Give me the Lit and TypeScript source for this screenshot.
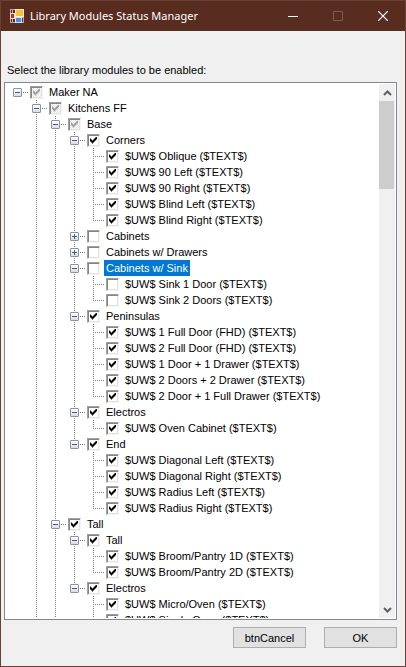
import { LitElement, html, css, svg, nothing } from "lit";
import { customElement, property, state } from "lit/decorators.js";
import { classMap } from "lit/directives/class-map.js";

type Check = "on" | "off" | "mixed";

interface Module {
  name: string;
  check: Check;
  open?: boolean;
  children?: Module[];
  /** True while the list holds further children that are not loaded yet. */
  more?: boolean;
}

interface Row {
  module: Module;
  id: string;
  /** One entry for each ancestor column: true where a line runs through. */
  guides: boolean[];
  last: boolean;
}

const leaf = (name: string, check: Check = "on"): Module => ({ name: `$UW$ ${name} ($TEXT$)`, check });
const group = (name: string, check: Check, children: Module[], open = true, more = false): Module => ({
  name,
  check,
  open,
  children,
  more,
});

const kitchens = group(
  "Kitchens FF",
  "mixed",
  [
    group("Base", "mixed", [
      group("Corners", "on", ["Oblique", "90 Left", "90 Right", "Blind Left", "Blind Right"].map((n) => leaf(n))),
      group("Cabinets", "off", [], false),
      group("Cabinets w/ Drawers", "off", [], false),
      group("Cabinets w/ Sink", "off", [leaf("Sink 1 Door", "off"), leaf("Sink 2 Doors", "off")]),
      group("Peninsulas", "on", [
        leaf("1 Full Door (FHD)"),
        leaf("2 Full Door (FHD)"),
        leaf("1 Door + 1 Drawer"),
        leaf("2 Doors + 2 Drawer"),
        leaf("2 Door + 1 Full Drawer"),
      ]),
      group("Electros", "on", [leaf("Oven Cabinet")]),
      group("End", "on", ["Diagonal Left", "Diagonal Right", "Radius Left", "Radius Right"].map((n) => leaf(n))),
    ]),
    group("Tall", "on", [
      group("Tall", "on", [leaf("Broom/Pantry 1D"), leaf("Broom/Pantry 2D")]),
      group("Electros", "on", [leaf("Micro/Oven"), leaf("Single Oven")], true, true),
    ]),
  ],
  true,
  true,
);

const library: Module[] = [group("Maker NA", "mixed", [kitchens], true, true)];

function flatten(list: Module[], more = false, guides: boolean[] = [], path = "m"): Row[] {
  return list.flatMap((module, i) => {
    const last = i === list.length - 1 && !more;
    const id = `${path}-${i}`;
    const row: Row = { module, id, guides, last };
    const below = module.open && module.children ? flatten(module.children, module.more, [...guides, !last], id) : [];
    return [row, ...below];
  });
}

@customElement("module-tree")
export class ModuleTree extends LitElement {
  @property({ attribute: false }) modules: Module[] = [];
  @state() private selected = "m-0-0-0-3";

  static styles = css`
    :host {
      display: flex;
      min-height: 0;
      box-sizing: border-box;
      border: 1px solid #828790;
      padding: 1px;
      background: #fff;
      overflow: hidden;
    }
    .rows {
      flex: 1;
      min-width: 0;
      overflow: hidden;
      margin: 0;
      padding: 0 0 0 2px;
      list-style: none;
    }
    .row {
      display: flex;
      align-items: center;
      height: 16px;
      white-space: nowrap;
    }
    .col {
      position: relative;
      flex: none;
      width: 19px;
      height: 16px;
    }
    .col.node {
      width: 22px;
    }
    .line::before {
      content: "";
      position: absolute;
      left: 9px;
      top: 0;
      width: 1px;
      height: 16px;
      background: repeating-linear-gradient(#808080 0 1px, transparent 1px 2px);
    }
    .line.last::before {
      height: 8px;
    }
    .node::after {
      content: "";
      position: absolute;
      left: 9px;
      top: 8px;
      width: 12px;
      height: 1px;
      background: repeating-linear-gradient(90deg, #808080 0 1px, transparent 1px 2px);
    }
    .toggle {
      position: absolute;
      z-index: 1;
      left: 5px;
      top: 4px;
      width: 9px;
      height: 9px;
      padding: 0;
      border: 1px solid #919191;
      border-radius: 1px;
      background: linear-gradient(#fff, #dcdcdc);
    }
    .toggle svg {
      display: block;
    }
    .box {
      appearance: none;
      position: relative;
      flex: none;
      width: 13px;
      height: 13px;
      margin: 0 4px 0 0;
      background: #fff;
      border: 1px solid;
      border-color: #a0a0a0 #f4f4f4 #f4f4f4 #a0a0a0;
      box-shadow: inset 1px 1px #848484, inset -1px -1px #e3e3e3;
    }
    .box:checked::before {
      content: "";
      position: absolute;
      left: 2px;
      top: 2px;
      width: 7px;
      height: 7px;
      background: #000;
      clip-path: polygon(
        0 2px, 1px 2px, 1px 3px, 2px 3px, 2px 4px, 3px 4px, 3px 3px, 4px 3px, 4px 2px, 5px 2px, 5px 1px, 6px 1px,
        6px 0, 7px 0, 7px 3px, 6px 3px, 6px 4px, 5px 4px, 5px 5px, 4px 5px, 4px 6px, 3px 6px, 3px 7px, 2px 7px,
        2px 6px, 1px 6px, 1px 5px, 0 5px
      );
    }
    .box.mixed {
      background: repeating-conic-gradient(#e6e6e6 0 25%, #fff 0 50%) 0 0 / 2px 2px;
    }
    .box.mixed::before {
      background: #a0a0a0;
    }
    .name {
      height: 16px;
      line-height: 16px;
      padding: 0 2px;
    }
    .name.selected {
      background: #0078d7;
      color: #fff;
    }
    .scroll {
      flex: none;
      display: flex;
      flex-direction: column;
      width: 16px;
      background: #f0f0f0;
    }
    .arrow {
      display: grid;
      place-items: center;
      flex: none;
      width: 16px;
      height: 17px;
      padding: 0;
      border: 0;
      background: none;
    }
    .track {
      flex: 1;
    }
    .thumb {
      width: 15px;
      height: 88px;
      background: #cdcdcd;
    }
  `;

  private toggle(m: Module) {
    m.open = !m.open;
    this.requestUpdate();
  }

  private rowTemplate({ module, id, guides, last }: Row) {
    const root = guides.length === 0;
    return html`
      <li class="row">
        ${guides.map((on, i) => html`<span class=${classMap({ col: true, line: on && i > 0 })}></span>`)}
        <span class=${classMap({ col: true, node: true, line: !root, last })}>
          ${module.children
            ? html`<button
                class="toggle"
                aria-label=${`${module.open ? "Collapse" : "Expand"} ${module.name}`}
                @click=${() => this.toggle(module)}
              >
                <svg width="7" height="7" viewBox="0 0 7 7" fill="#3c5aa0" shape-rendering="crispEdges">
                  <rect x="1" y="3" width="5" height="1" />
                  ${module.open ? nothing : svg`<rect x="3" y="1" width="1" height="5" />`}
                </svg>
              </button>`
            : nothing}
        </span>
        <input
          class=${classMap({ box: true, mixed: module.check === "mixed" })}
          type="checkbox"
          id=${id}
          .checked=${module.check !== "off"}
          @focus=${() => (this.selected = id)}
        />
        <label class=${classMap({ name: true, selected: this.selected === id })} for=${id}>${module.name}</label>
      </li>
    `;
  }

  render() {
    return html`
      <ul class="rows">
        ${flatten(this.modules).map((row) => this.rowTemplate(row))}
      </ul>
      <div class="scroll">
        <button class="arrow" aria-label="Scroll up">
          <svg width="9" height="6" viewBox="0 0 9 6"><path d="M1 5 4.500 1.500 8 5" fill="none" stroke="#606060" stroke-width="2" /></svg>
        </button>
        <div class="track"><div class="thumb"></div></div>
        <button class="arrow" aria-label="Scroll down">
          <svg width="9" height="6" viewBox="0 0 9 6"><path d="M1 1 4.500 4.500 8 1" fill="none" stroke="#606060" stroke-width="2" /></svg>
        </button>
      </div>
    `;
  }
}

@customElement("app-root")
export class AppRoot extends LitElement {
  static styles = css`
    :host {
      display: flex;
      flex-direction: column;
      box-sizing: border-box;
      height: 100vh;
      border: 1px solid #6b4135;
      background: #f0f0f0;
      color: #000;
      font: 11px/16px "Liberation Sans", Arial, sans-serif;
    }
    .titlebar {
      display: flex;
      align-items: center;
      flex: none;
      height: 30px;
      padding-left: 9px;
      background: #582c1e;
      color: #fff;
    }
    .title {
      flex: 1;
      margin: 0 0 0 6px;
      font: 11px/16px "Noto Sans", "Open Sans", sans-serif;
      white-space: nowrap;
    }
    .winbtn {
      display: grid;
      place-items: center;
      width: 45px;
      height: 30px;
      padding: 0;
      border: 0;
      background: none;
      color: #fff;
    }
    .winbtn:disabled {
      color: #7d5b50;
    }
    .body {
      flex: 1;
      min-height: 0;
      display: flex;
      flex-direction: column;
      padding: 31px 8px 18px 3px;
    }
    .prompt {
      margin: 0 0 4px 3px;
    }
    module-tree {
      flex: 1;
    }
    .actions {
      display: flex;
      justify-content: flex-end;
      gap: 18px;
      margin-top: 7px;
    }
    .action {
      width: 73px;
      height: 21px;
      padding: 0;
      border: 1px solid #adadad;
      background: #e1e1e1;
      color: #000;
      font: inherit;
    }
  `;

  render() {
    return html`
      <header class="titlebar">
        <svg width="14" height="14" viewBox="0 0 14 14" shape-rendering="crispEdges" aria-hidden="true">
          <rect width="14" height="14" fill="#b9aca6" />
          <path d="M1 1h1v3h-1zM3 1h2v3h-2zM1 10h1v3h-1zM3 10h2v3h-2zM12 9h1v4h-1z" fill="#582c1e" />
          <rect y="4" width="5" height="6" fill="#f3dcd8" />
          <rect x="1" y="5" width="3" height="4" fill="#cf2a20" />
          <rect x="5" width="9" height="8" fill="#fbeec4" />
          <rect x="6" y="1" width="7" height="6" fill="#f6c232" />
          <rect x="5" y="8" width="7" height="6" fill="#d6e4fa" />
          <rect x="6" y="9" width="5" height="4" fill="#4f8be6" />
        </svg>
        <h1 class="title">Library Modules Status Manager</h1>
        <button class="winbtn" aria-label="Minimize">
          <svg width="10" height="10"><path d="M0 5.500h10" stroke="currentColor" /></svg>
        </button>
        <button class="winbtn" aria-label="Maximize" disabled>
          <svg width="10" height="10"><path d="M.5.500h9v9h-9z" fill="none" stroke="currentColor" /></svg>
        </button>
        <button class="winbtn" aria-label="Close">
          <svg width="10" height="10"><path d="M0 0 10 10M10 0 0 10" stroke="currentColor" stroke-width="1.200" /></svg>
        </button>
      </header>
      <main class="body">
        <p class="prompt">Select the library modules to be enabled:</p>
        <module-tree .modules=${library}></module-tree>
        <div class="actions">
          <button class="action">btnCancel</button>
          <button class="action">OK</button>
        </div>
      </main>
    `;
  }
}
